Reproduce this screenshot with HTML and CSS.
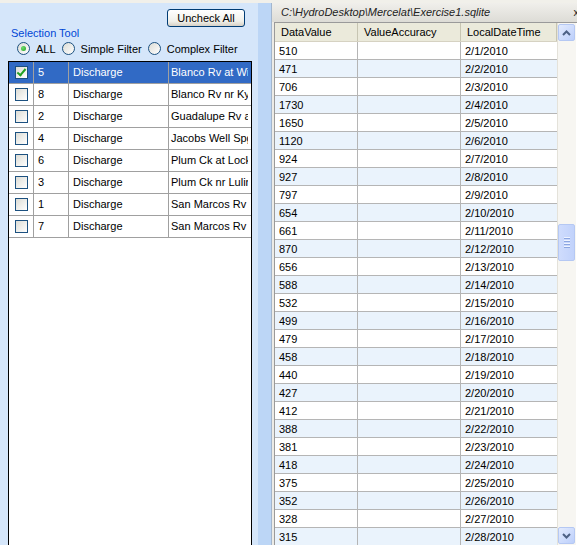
FILE: index.html
```html
<!DOCTYPE html>
<html lang="en">
<head>
  <meta charset="UTF-8">
  <title>Selection Tool</title>
  <link rel="stylesheet" href="styles.css">
</head>
<body>
  <div class="window">
    <div class="left">
      <div class="toolbar">
        <button class="btn">Uncheck All</button>
      </div>
      <div class="group">
        <div class="legend">Selection Tool</div>
        <div class="radios">
          <label class="radio"><span class="dot on"></span>ALL</label>
          <label class="radio"><span class="dot"></span>Simple Filter</label>
          <label class="radio"><span class="dot"></span>Complex Filter</label>
        </div>
      </div>
      <div class="grid">
        <div class="grow selected"><span class="c"><i class="box checked"></i></span><span>5</span><span>Discharge</span><span>Blanco Rv at Wimberley</span></div>
        <div class="grow"><span class="c"><i class="box"></i></span><span>8</span><span>Discharge</span><span>Blanco Rv nr Kyle</span></div>
        <div class="grow"><span class="c"><i class="box"></i></span><span>2</span><span>Discharge</span><span>Guadalupe Rv at Gonzales</span></div>
        <div class="grow"><span class="c"><i class="box"></i></span><span>4</span><span>Discharge</span><span>Jacobs Well Spg</span></div>
        <div class="grow"><span class="c"><i class="box"></i></span><span>6</span><span>Discharge</span><span>Plum Ck at Lockhart</span></div>
        <div class="grow"><span class="c"><i class="box"></i></span><span>3</span><span>Discharge</span><span>Plum Ck nr Luling</span></div>
        <div class="grow"><span class="c"><i class="box"></i></span><span>1</span><span>Discharge</span><span>San Marcos Rv</span></div>
        <div class="grow"><span class="c"><i class="box"></i></span><span>7</span><span>Discharge</span><span>San Marcos Rv</span></div>
      </div>
    </div>

    <div class="splitter"></div>

    <div class="right">
      <div class="caption">C:\HydroDesktop\Mercelat\Exercise1.sqlite<span class="close">x</span></div>
      <div class="frame">
        <div class="table">
          <div class="row head"><span>DataValue</span><span>ValueAccuracy</span><span>LocalDateTime</span></div>
          <div class="row"><span>510</span><span></span><span>2/1/2010</span></div>
          <div class="row"><span>471</span><span></span><span>2/2/2010</span></div>
          <div class="row"><span>706</span><span></span><span>2/3/2010</span></div>
          <div class="row"><span>1730</span><span></span><span>2/4/2010</span></div>
          <div class="row"><span>1650</span><span></span><span>2/5/2010</span></div>
          <div class="row"><span>1120</span><span></span><span>2/6/2010</span></div>
          <div class="row"><span>924</span><span></span><span>2/7/2010</span></div>
          <div class="row"><span>927</span><span></span><span>2/8/2010</span></div>
          <div class="row"><span>797</span><span></span><span>2/9/2010</span></div>
          <div class="row"><span>654</span><span></span><span>2/10/2010</span></div>
          <div class="row"><span>661</span><span></span><span>2/11/2010</span></div>
          <div class="row"><span>870</span><span></span><span>2/12/2010</span></div>
          <div class="row"><span>656</span><span></span><span>2/13/2010</span></div>
          <div class="row"><span>588</span><span></span><span>2/14/2010</span></div>
          <div class="row"><span>532</span><span></span><span>2/15/2010</span></div>
          <div class="row"><span>499</span><span></span><span>2/16/2010</span></div>
          <div class="row"><span>479</span><span></span><span>2/17/2010</span></div>
          <div class="row"><span>458</span><span></span><span>2/18/2010</span></div>
          <div class="row"><span>440</span><span></span><span>2/19/2010</span></div>
          <div class="row"><span>427</span><span></span><span>2/20/2010</span></div>
          <div class="row"><span>412</span><span></span><span>2/21/2010</span></div>
          <div class="row"><span>388</span><span></span><span>2/22/2010</span></div>
          <div class="row"><span>381</span><span></span><span>2/23/2010</span></div>
          <div class="row"><span>418</span><span></span><span>2/24/2010</span></div>
          <div class="row"><span>375</span><span></span><span>2/25/2010</span></div>
          <div class="row"><span>352</span><span></span><span>2/26/2010</span></div>
          <div class="row"><span>328</span><span></span><span>2/27/2010</span></div>
          <div class="row"><span>315</span><span></span><span>2/28/2010</span></div>
        </div>
        <div class="scroll">
          <div class="sbtn"><svg width="9" height="6" viewBox="0 0 9 6"><path d="M1 5 L4.5 1.5 L8 5" fill="none" stroke="#4d6185" stroke-width="2"/></svg></div>
          <div class="track">
            <div class="thumb"><i></i><i></i><i></i><i></i></div>
          </div>
          <div class="sbtn"><svg width="9" height="6" viewBox="0 0 9 6"><path d="M1 1 L4.5 4.5 L8 1" fill="none" stroke="#4d6185" stroke-width="2"/></svg></div>
        </div>
      </div>
    </div>
  </div>
</body>
</html>
```

FILE: styles.css
```css
html, body {
  margin: 0;
  height: 100%;
  overflow: hidden;
}

body {
  font-family: "Liberation Sans", Arial, sans-serif;
  font-size: 11px;
  color: #000;
  background: #f1f0ea;
}

.window {
  display: flex;
  height: 542px;
  margin-top: 3px;
}

/* left side */

.left {
  width: 258px;
  background: #d5e6fa;
  display: flex;
  flex-direction: column;
}

.toolbar {
  display: flex;
  justify-content: flex-end;
  padding: 6px 13px 0 0;
  height: 18px;
}

.btn {
  font-family: inherit;
  font-size: 11px;
  width: 78px;
  height: 18px;
  padding: 0;
  border: 1px solid #003c74;
  border-radius: 3px;
  background: linear-gradient(#ffffff, #f0f0ea 70%, #d6d0c5);
  color: #000;
}

.group {
  margin: -1px 0 0 5px;
  height: 35px;
}

.legend {
  color: #0046d5;
  padding-left: 6px;
  height: 14px;
  line-height: 14px;
}

.radios {
  display: flex;
  align-items: center;
  height: 17px;
  padding-left: 12px;
  gap: 6px;
}

.radio {
  display: flex;
  align-items: center;
  gap: 6px;
}

.dot {
  width: 11px;
  height: 11px;
  border: 1px solid #1c5180;
  border-radius: 50%;
  background: linear-gradient(135deg, #dcdcd5, #ffffff);
  display: flex;
  align-items: center;
  justify-content: center;
}

.dot.on::after {
  content: "";
  width: 5px;
  height: 5px;
  border-radius: 50%;
  background: radial-gradient(circle at 35% 35%, #6fdc6f, #21a121);
}

.grid {
  margin: 0 0 0 8px;
  width: 242px;
  flex: 1;
  border: 1px solid #000;
  border-bottom: none;
  background: #fff;
}

.grow {
  display: grid;
  grid-template-columns: 25px 35px 100px 79px;
  height: 22px;
  border-bottom: 1px solid #a0a0a0;
  box-sizing: border-box;
}

.grow span {
  border-right: 1px solid #a0a0a0;
  padding-left: 4px;
  line-height: 21px;
  white-space: nowrap;
  overflow: hidden;
}

.grow span:last-child {
  border-right: none;
  padding-left: 2px;
}

.grow .c {
  padding: 0;
  display: flex;
  align-items: center;
  justify-content: center;
}

.grow.selected {
  background: #316ac5;
  color: #fff;
}

.box {
  width: 11px;
  height: 11px;
  border: 1px solid #1c5180;
  background: linear-gradient(135deg, #dcdcd5, #ffffff);
  position: relative;
}

.box.checked::after {
  content: "";
  position: absolute;
  left: 3px;
  top: 0px;
  width: 3px;
  height: 7px;
  border: solid #21a121;
  border-width: 0 2px 2px 0;
  transform: rotate(40deg);
}

/* splitter */

.splitter {
  width: 13px;
  background: #bcd6f6;
  border-right: 1px solid #a3b6cd;
}

/* right side */

.right {
  width: 305px;
  display: flex;
  flex-direction: column;
  background: #ecebe6;
}

.caption {
  height: 19px;
  line-height: 19px;
  padding-left: 9px;
  font-style: italic;
  color: #222;
  background: linear-gradient(#f0efeb, #dddcd6);
  position: relative;
}

.caption .close {
  position: absolute;
  right: -2px;
  top: 0;
  font-style: normal;
}

.frame {
  flex: 1;
  margin-left: 2px;
  border: 1px solid #9a9a9a;
  border-right: none;
  border-bottom: none;
  display: flex;
  overflow: hidden;
  background: #fff;
}

.table {
  width: 282px;
}

.row {
  display: grid;
  grid-template-columns: 83px 103px 96px;
  height: 18px;
  border-bottom: 1px solid #b5b5b5;
  box-sizing: border-box;
}

.row:nth-child(odd) {
  background: #eaf3fc;
}

.row span {
  border-right: 1px solid #b5b5b5;
  padding-left: 4px;
  line-height: 18px;
  white-space: nowrap;
  overflow: hidden;
}

.row span:last-child {
  border-right: none;
}

.row.head {
  background: #ebeadb;
  height: 19px;
  border-bottom: 1px solid #d6d2c2;
}

.row.head span {
  border-right: 1px solid #c7c5b2;
  padding-left: 6px;
  line-height: 18px;
}

.scroll {
  width: 18px;
  display: flex;
  flex-direction: column;
  background: #f7f6f2;
  border-left: 1px solid #e4e2da;
}

.sbtn {
  height: 17px;
  margin: 1px 1px 0 0;
  border: 1px solid #b5c8f3;
  border-radius: 2px;
  background: linear-gradient(135deg, #e3ebfe, #bccffb);
  display: flex;
  align-items: center;
  justify-content: center;
  box-sizing: border-box;
}

.sbtn:last-child {
  margin: 0 1px 1px 0;
}

.track {
  flex: 1;
  padding-top: 183px;
}

.thumb {
  height: 37px;
  margin-right: 1px;
  border: 1px solid #b5c8f3;
  border-radius: 2px;
  background: linear-gradient(90deg, #cfdcfd, #c1d2fb);
  box-sizing: border-box;
  display: flex;
  flex-direction: column;
  align-items: center;
  justify-content: center;
  gap: 1px;
}

.thumb i {
  width: 6px;
  height: 1px;
  background: #eef3ff;
  border-bottom: 1px solid #8ca6e0;
}
```
